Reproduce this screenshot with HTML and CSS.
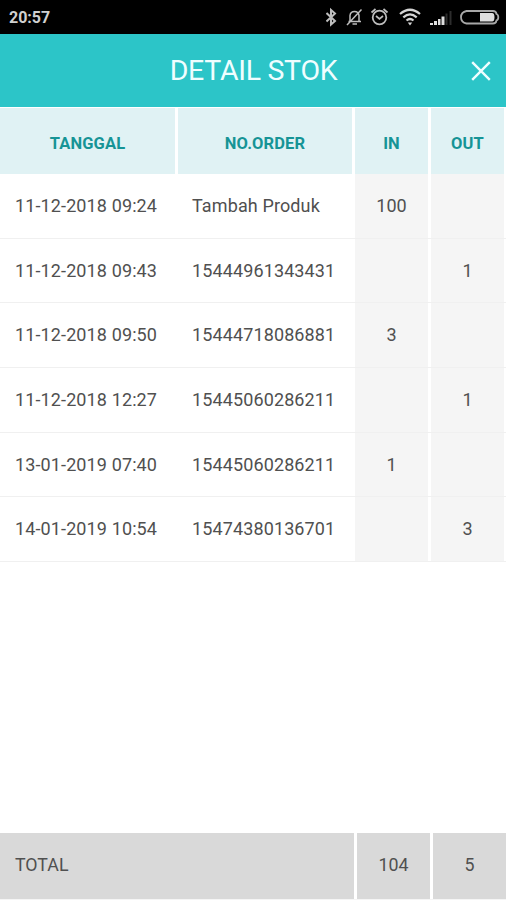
FILE: index.html
```html
<!DOCTYPE html>
<html lang="id">
<head>
<meta charset="utf-8">
<title>Detail Stok</title>
<link rel="stylesheet" href="styles.css">
</head>
<body>
<div class="screen">
  <div class="status">
    <span class="clock">20:57</span>
    <svg class="status-icons" width="180" height="34" viewBox="0 0 180 34" fill="none" stroke="#bdbdbd" stroke-width="1.8">
      <path d="M0.500 13 9 21 5 24.500V10L9 13.500 0.500 21.500" stroke-width="2"/>
      <path d="M22.500 21.500H35M24 21V15.500Q24.500 11.500 28.500 11.500T33 15.500V21M35.500 9.500 21 25M26.500 24H31" stroke-width="1.5"/>
      <circle cx="53.500" cy="17.500" r="6.800"/>
      <path d="M45.500 12.500 49.500 9M57.500 9 61.500 12.500M50 16 53.500 19 57 16" stroke-width="1.700"/>
      <path d="M74 14Q84 5.500 94 14M77.300 17.300Q84 11.500 90.700 17.300M80.500 20.500Q84 17.500 87.500 20.500" stroke="#d5d5d5" stroke-width="2.200"/>
      <path d="M81.800 22.500H86.200L84 25.500Z" fill="#d5d5d5" stroke="none"/>
      <path d="M104 23H107V25H104ZM108 21H111V25H108ZM112 19H114.500V25H112ZM115.500 16.500H118.500V25H115.500Z" fill="#dedede" stroke="none"/>
      <path d="M119.500 13.500H121.500V25H119.500ZM123.500 11H125.500V25H123.500Z" fill="#2d2d2d" stroke="none"/>
      <path d="M140.500 11H167Q170 11 170.500 14 172.300 14.500 172.300 17.300T170.500 20.500Q170 23.500 167 23.500H140.500Q135 22.500 135 17.300T140.500 11Z" stroke="#a8a8a8" stroke-width="1.800"/>
      <path d="M154 13H166Q168.500 13 168.500 17.300T166 21.500H154Z" fill="#dedede" stroke="none"/>
    </svg>
  </div>
  <header class="bar">
    <h1 class="title">DETAIL STOK</h1>
    <svg class="close" width="20" height="20" viewBox="0 0 20 20"><path d="M1.200 1.200 18.800 18.800M18.800 1.200 1.200 18.800" stroke="#effeff" stroke-width="2.400"/></svg>
  </header>
  <main class="table">
    <div class="row head"><div>TANGGAL</div><div>NO.ORDER</div><div>IN</div><div>OUT</div></div>
    <div class="row"><div>11-12-2018 09:24</div><div>Tambah Produk</div><div>100</div><div></div></div>
    <div class="row"><div>11-12-2018 09:43</div><div>15444961343431</div><div></div><div>1</div></div>
    <div class="row"><div>11-12-2018 09:50</div><div>15444718086881</div><div>3</div><div></div></div>
    <div class="row"><div>11-12-2018 12:27</div><div>15445060286211</div><div></div><div>1</div></div>
    <div class="row"><div>13-01-2019 07:40</div><div>15445060286211</div><div>1</div><div></div></div>
    <div class="row"><div>14-01-2019 10:54</div><div>15474380136701</div><div></div><div>3</div></div>
  </main>
  <footer class="total"><div>TOTAL</div><div>104</div><div>5</div></footer>
</div>
</body>
</html>
```

FILE: styles.css
```css
* { box-sizing: border-box; }
body { margin: 0; background: #fff; font-family: Roboto, sans-serif; color: #505050; }
.screen { height: 900px; display: flex; flex-direction: column; overflow: hidden; }
.status { height: 34px; flex: none; background: #000; display: flex; align-items: center; justify-content: space-between; padding: 0 0 0 9px; }
.clock { color: #d0d0d0; font-size: 16px; font-weight: 700; line-height: 34px; padding-top: 2px; }
.bar { height: 73px; flex: none; background: #2cc5c8; display: grid; grid-template-columns: 1fr auto 1fr; align-items: center; padding-right: 15px; padding-left: 16px; }
.title { grid-column: 2; margin: 0; color: #effeff; font-size: 28.5px; font-weight: 400; line-height: 34px; letter-spacing: -0.3px; }
.close { justify-self: end; }
.table { flex: 1; padding-top: 1px; }
.row { display: grid; grid-template-columns: 175px 174px 73px 73px; column-gap: 3px; height: 64.7px; border-bottom: 1.5px solid #f0f0f0; font-size: 18px; letter-spacing: 0.12px; }
.row > div { display: flex; align-items: center; padding: 0 0 1px 15px; }
.row > div:nth-child(2) { padding-left: 14px; }
.row > div:nth-child(n+3) { background: #f5f5f5; justify-content: center; padding-left: 0; }
.head { height: 66px; border-bottom: 0; font-size: 16.5px; font-weight: 700; color: #169496; }
.row.head > div { background: #e0f2f4; justify-content: center; padding: 5px 0 0; }
.total { height: 67px; flex: none; display: grid; grid-template-columns: 354px 73px 73px; column-gap: 3px; border-bottom: 1px solid #f5f5f5; font-size: 17.8px; }
.total > div { background: #d9d9d9; display: flex; align-items: center; justify-content: center; padding-bottom: 3px; }
.total > div:first-child { justify-content: flex-start; padding-left: 15px; }
```
